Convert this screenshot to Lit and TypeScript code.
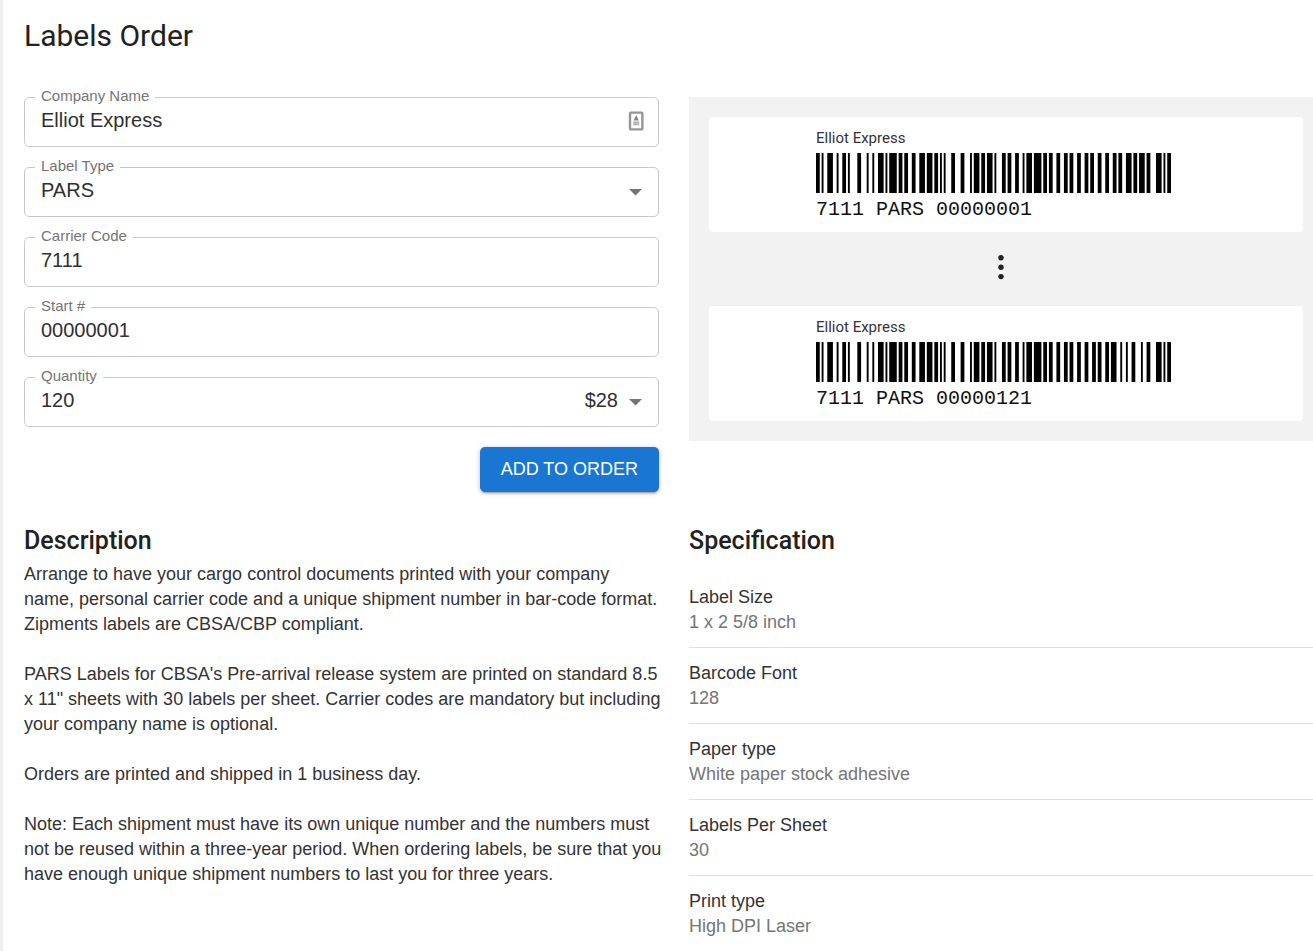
import { LitElement, html, svg, css } from "lit";
import { customElement, property } from "lit/decorators.js";

// Code 128 bar/space widths, indexed by symbol value.
const PATTERNS = (
  "212222 222122 222221 121223 121322 131222 122213 122312 132212 221213 221312 231212 112232 122132 122231 " +
  "113222 123122 123221 223211 221132 221231 213212 223112 312131 311222 321122 321221 312212 322112 322211 " +
  "212123 212321 232121 111323 131123 131321 112313 132113 132311 211313 231113 231311 112133 112331 132131 " +
  "113123 113321 133121 313121 211331 231131 213113 213311 213131 311123 311321 331121 312113 312311 332111 " +
  "314111 221411 431111 111224 111422 121124 121421 141122 141221 112214 112412 122114 122411 142112 142211 " +
  "241211 221114 413111 241112 134111 111242 121142 121241 114212 124112 124211 411212 421112 421211 212141 " +
  "214121 412121 111143 111341 131141 114113 114311 411113 411311 113141 114131 311141 411131 211412 211214 " +
  "211232 2331112"
).split(" ");

const CODE_C = 99;
const CODE_A = 101;
const START_C = 105;
const STOP = 106;

// Digit runs are packed in pairs (set C); everything else uses set A.
function encode(text: string): number[] {
  const out: number[] = [START_C];
  let packed = true;
  for (const run of text.match(/\d+|\D+/g) ?? []) {
    if (/\d/.test(run)) {
      if (!packed) out.push(CODE_C);
      packed = true;
      for (let i = 0; i < run.length; i += 2) out.push(Number(run.slice(i, i + 2)));
    } else {
      if (packed) out.push(CODE_A);
      packed = false;
      for (const ch of run) out.push(ch.charCodeAt(0) - 32);
    }
  }
  const check = out.reduce((sum, v, i) => sum + v * Math.max(i, 1), 0) % 103;
  return [...out, check, STOP];
}

@customElement("shipping-label")
class ShippingLabel extends LitElement {
  @property() company = "";
  @property() code = "";

  static styles = css`
    :host { display: block; background: #fff; border-radius: 4px; padding: 10px 0 9px; }
    .block { width: 380px; max-width: 100%; margin: 0 auto; }
    .company { font: 400 15px/22px Roboto, sans-serif; color: #333; }
    .bars { display: block; width: 355px; height: 40px; margin: 4px 0; }
    .code { font: 20px/26px "Liberation Mono", monospace; color: #111; }
  `;

  render() {
    let x = 0;
    const bars = [];
    for (const symbol of encode(this.code)) {
      [...PATTERNS[symbol]].forEach((d, i) => {
        const w = Number(d);
        if (i % 2 === 0) bars.push(svg`<rect x=${x} y="0" width=${w} height="40"></rect>`);
        x += w;
      });
    }
    return html`
      <div class="block">
        <div class="company">${this.company}</div>
        <svg class="bars" viewBox="0 0 ${x} 40" preserveAspectRatio="none" role="img" aria-label="Barcode">${bars}</svg>
        <div class="code">${this.code}</div>
      </div>
    `;
  }
}

const SPECS = [
  ["Label Size", "1 x 2 5/8 inch"],
  ["Barcode Font", "128"],
  ["Paper type", "White paper stock adhesive"],
  ["Labels Per Sheet", "30"],
  ["Print type", "High DPI Laser"],
];

const PARAGRAPHS = [
  "Arrange to have your cargo control documents printed with your company name, personal carrier code and a unique shipment number in bar-code format. Zipments labels are CBSA/CBP compliant.",
  "PARS Labels for CBSA's Pre-arrival release system are printed on standard 8.5 x 11\" sheets with 30 labels per sheet. Carrier codes are mandatory but including your company name is optional.",
  "Orders are printed and shipped in 1 business day.",
  "Note: Each shipment must have its own unique number and the numbers must not be reused within a three-year period. When ordering labels, be sure that you have enough unique shipment numbers to last you for three years.",
];

const arrow = html`<svg class="arrow" viewBox="0 0 13 7" aria-hidden="true"><path d="M0 0h13L6.5 6.5z" fill="#757575"></path></svg>`;

@customElement("app-root")
class AppRoot extends LitElement {
  static styles = css`
    * { box-sizing: border-box; }
    :host {
      display: block; min-height: 100vh; background: #fff; overflow: hidden;
      border-left: 3px solid #f0f0f0; color: #333;
      font: 18px/25px "Liberation Sans", Arial, sans-serif;
    }
    .page { padding: 16px 0 0 21px; }
    h1 { margin: 0; font: 400 30px/40px Roboto, sans-serif; color: #212121; }
    h2 { margin: 0; font: 500 25px/40px Roboto, sans-serif; color: #212121; }
    .cols { display: grid; grid-template-columns: minmax(0, 635fr) minmax(0, 624fr); column-gap: 30px; align-items: start; }
    .top { margin-top: 41px; }
    .bottom { margin-top: 29px; }
    form { display: flex; flex-direction: column; gap: 20px; }
    .field { position: relative; display: flex; align-items: center; height: 50px; border: 1px solid #c9c9c9; border-radius: 5px; }
    .field label { position: absolute; top: -12px; left: 10px; padding: 0 6px; background: #fff; font-size: 15px; line-height: 20px; color: #757575; }
    .control {
      flex: 1; min-width: 0; height: 48px; margin: 0; padding: 0 16px 4px; border: 0; outline: 0; background: none;
      appearance: none; font: 20px/24px "Liberation Sans", Arial, sans-serif; color: #303030;
    }
    .arrow, .contact, .price { position: absolute; pointer-events: none; }
    .arrow { right: 16px; top: 21px; width: 13px; height: 7px; }
    .contact { right: 14px; top: 13px; width: 16px; height: 20px; }
    .price { right: 40px; top: 10px; font-size: 20px; line-height: 24px; color: #303030; }
    .submit {
      align-self: flex-end; height: 45px; padding: 0 21px 2px; border: 0; border-radius: 5px; background: #1976d2; color: #fff;
      font: 18px/24px "Liberation Sans", Arial, sans-serif; text-transform: uppercase;
      box-shadow: 0 3px 2px -2px rgba(0, 0, 0, 0.3), 0 1px 5px rgba(0, 0, 0, 0.25);
    }
    .preview { background: #f2f2f2; padding: 20px 10px 20px 20px; }
    .dots { display: block; width: 6px; height: 26px; margin: 22px auto 26px; position: relative; right: 5px; }
    p { margin: 0 0 25px; }
    dl { margin: 0; padding-top: 11px; }
    .row { padding: 13px 0 12px; border-bottom: 1px solid #e0e0e0; }
    .row:last-child { border-bottom: 0; }
    dd { margin: 0; color: #757575; }
    .text { padding-top: 1px; margin-right: -3px; }
  `;

  render() {
    return html`
      <main class="page">
        <h1>Labels Order</h1>
        <div class="cols top">
          <form @submit=${(e: Event) => e.preventDefault()}>
            <div class="field">
              <input class="control" id="company" value="Elliot Express" />
              <label for="company">Company Name</label>
              <svg class="contact" viewBox="0 0 16 20" aria-hidden="true">
                <rect x="2" y="1.6" width="12.4" height="16.8" rx="1" fill="#fff" stroke="#969696" stroke-width="2.4"></rect>
                <path d="M8.2 4.2l1.2 2.4 1.4 2.8H5.6L7 6.6z" fill="#858585"></path>
                <path d="M5.2 11.4h6M5.2 13.4h6" stroke="#b0b0b0" stroke-width="1.6"></path>
              </svg>
            </div>
            <div class="field">
              <select class="control" id="type"><option>PARS</option></select>
              <label for="type">Label Type</label>
              ${arrow}
            </div>
            <div class="field">
              <input class="control" id="carrier" value="7111" />
              <label for="carrier">Carrier Code</label>
            </div>
            <div class="field">
              <input class="control" id="start" value="00000001" />
              <label for="start">Start #</label>
            </div>
            <div class="field">
              <select class="control" id="quantity"><option>120</option></select>
              <label for="quantity">Quantity</label>
              <span class="price">$28</span>
              ${arrow}
            </div>
            <button class="submit" type="submit">Add to order</button>
          </form>
          <section class="preview" aria-label="Preview">
            <shipping-label company="Elliot Express" code="7111 PARS 00000001"></shipping-label>
            <svg class="dots" viewBox="0 0 6 26" aria-hidden="true">
              <g fill="#212121"><circle cx="3" cy="3.8" r="2.7"></circle><circle cx="3" cy="13.2" r="2.7"></circle><circle cx="3" cy="22.6" r="2.7"></circle></g>
            </svg>
            <shipping-label company="Elliot Express" code="7111 PARS 00000121"></shipping-label>
          </section>
        </div>
        <div class="cols bottom">
          <section>
            <h2>Description</h2>
            <div class="text">${PARAGRAPHS.map((t) => html`<p>${t}</p>`)}</div>
          </section>
          <section>
            <h2>Specification</h2>
            <dl>${SPECS.map(([k, v]) => html`<div class="row"><dt>${k}</dt><dd>${v}</dd></div>`)}</dl>
          </section>
        </div>
      </main>
    `;
  }
}
